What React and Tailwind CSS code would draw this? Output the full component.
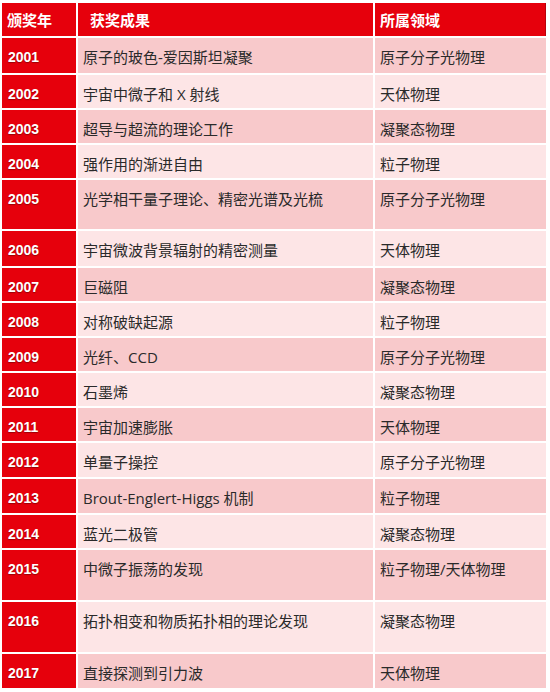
import React from "react";

const rows = [
  { y: "2001", t: "原子的玻色-爱因斯坦凝聚", f: "原子分子光物理", h: "h-[35px]" },
  { y: "2002", t: "宇宙中微子和 X 射线", f: "天体物理", h: "h-[33px]" },
  { y: "2003", t: "超导与超流的理论工作", f: "凝聚态物理", h: "h-[33px]" },
  { y: "2004", t: "强作用的渐进自由", f: "粒子物理", h: "h-[33px]" },
  { y: "2005", t: "光学相干量子理论、精密光谱及光梳", f: "原子分子光物理", h: "h-[49px]" },
  { y: "2006", t: "宇宙微波背景辐射的精密测量", f: "天体物理", h: "h-[35px]" },
  { y: "2007", t: "巨磁阻", f: "凝聚态物理", h: "h-[33px]" },
  { y: "2008", t: "对称破缺起源", f: "粒子物理", h: "h-[33px]" },
  { y: "2009", t: "光纤、CCD", f: "原子分子光物理", h: "h-[33px]" },
  { y: "2010", t: "石墨烯", f: "凝聚态物理", h: "h-[33px]" },
  { y: "2011", t: "宇宙加速膨胀", f: "天体物理", h: "h-[33px]" },
  { y: "2012", t: "单量子操控", f: "原子分子光物理", h: "h-[34px]" },
  { y: "2013", t: "Brout-Englert-Higgs 机制", f: "粒子物理", h: "h-[34px]" },
  { y: "2014", t: "蓝光二极管", f: "凝聚态物理", h: "h-[33px]" },
  { y: "2015", t: "中微子振荡的发现", f: "粒子物理/天体物理", h: "h-[50px]" },
  { y: "2016", t: "拓扑相变和物质拓扑相的理论发现", f: "凝聚态物理", h: "h-[50px]" },
  { y: "2017", t: "直接探测到引力波", f: "天体物理", h: "h-[34px]" },
];

const cjk = "font-['Open_Sans','Noto_Sans_CJK_SC',sans-serif]";

export default function App() {
  return (
    <div className="w-[550px] h-[692px] bg-white pl-[2px] pt-[3px] overflow-hidden">
      <div className="flex flex-col gap-[2px] w-[544px]">
        <div className="grid grid-cols-[74px_295px_171px] gap-x-[2px] h-[33px]">
          <div className={`bg-[#e6000c] text-white font-bold text-[15px] leading-[18px] pt-[8px] pl-[5px] ${cjk}`}>颁奖年</div>
          <div className={`bg-[#e6000c] text-white font-bold text-[15px] leading-[18px] pt-[8px] pl-[12px] ${cjk}`}>获奖成果</div>
          <div className={`bg-[#e6000c] text-white font-bold text-[15px] leading-[18px] pt-[8px] pl-[5px] border-r border-[#b8000a] ${cjk}`}>所属领域</div>
        </div>
        {rows.map((r, i) => {
          const bg = i % 2 === 0 ? "bg-[#f8c9cb]" : "bg-[#fde5e6]";
          return (
            <div key={r.y} className={`grid grid-cols-[74px_295px_171px] gap-x-[2px] ${r.h}`}>
              <div className="bg-[#e6000c] text-white font-bold text-[14px] leading-[18px] pt-[10px] pl-[6px] font-['Liberation_Sans',sans-serif] [text-shadow:0_1px_1px_rgba(80,0,0,0.5)]">
                {r.y}
              </div>
              <div className={`${bg} text-[#2a2a2a] text-[15px] leading-[18px] pt-[10px] pl-[5px] ${cjk}`}>{r.t}</div>
              <div className={`${bg} text-[#2a2a2a] text-[15px] leading-[18px] pt-[10px] pl-[5px] ${cjk}`}>{r.f}</div>
            </div>
          );
        })}
      </div>
    </div>
  );
}
